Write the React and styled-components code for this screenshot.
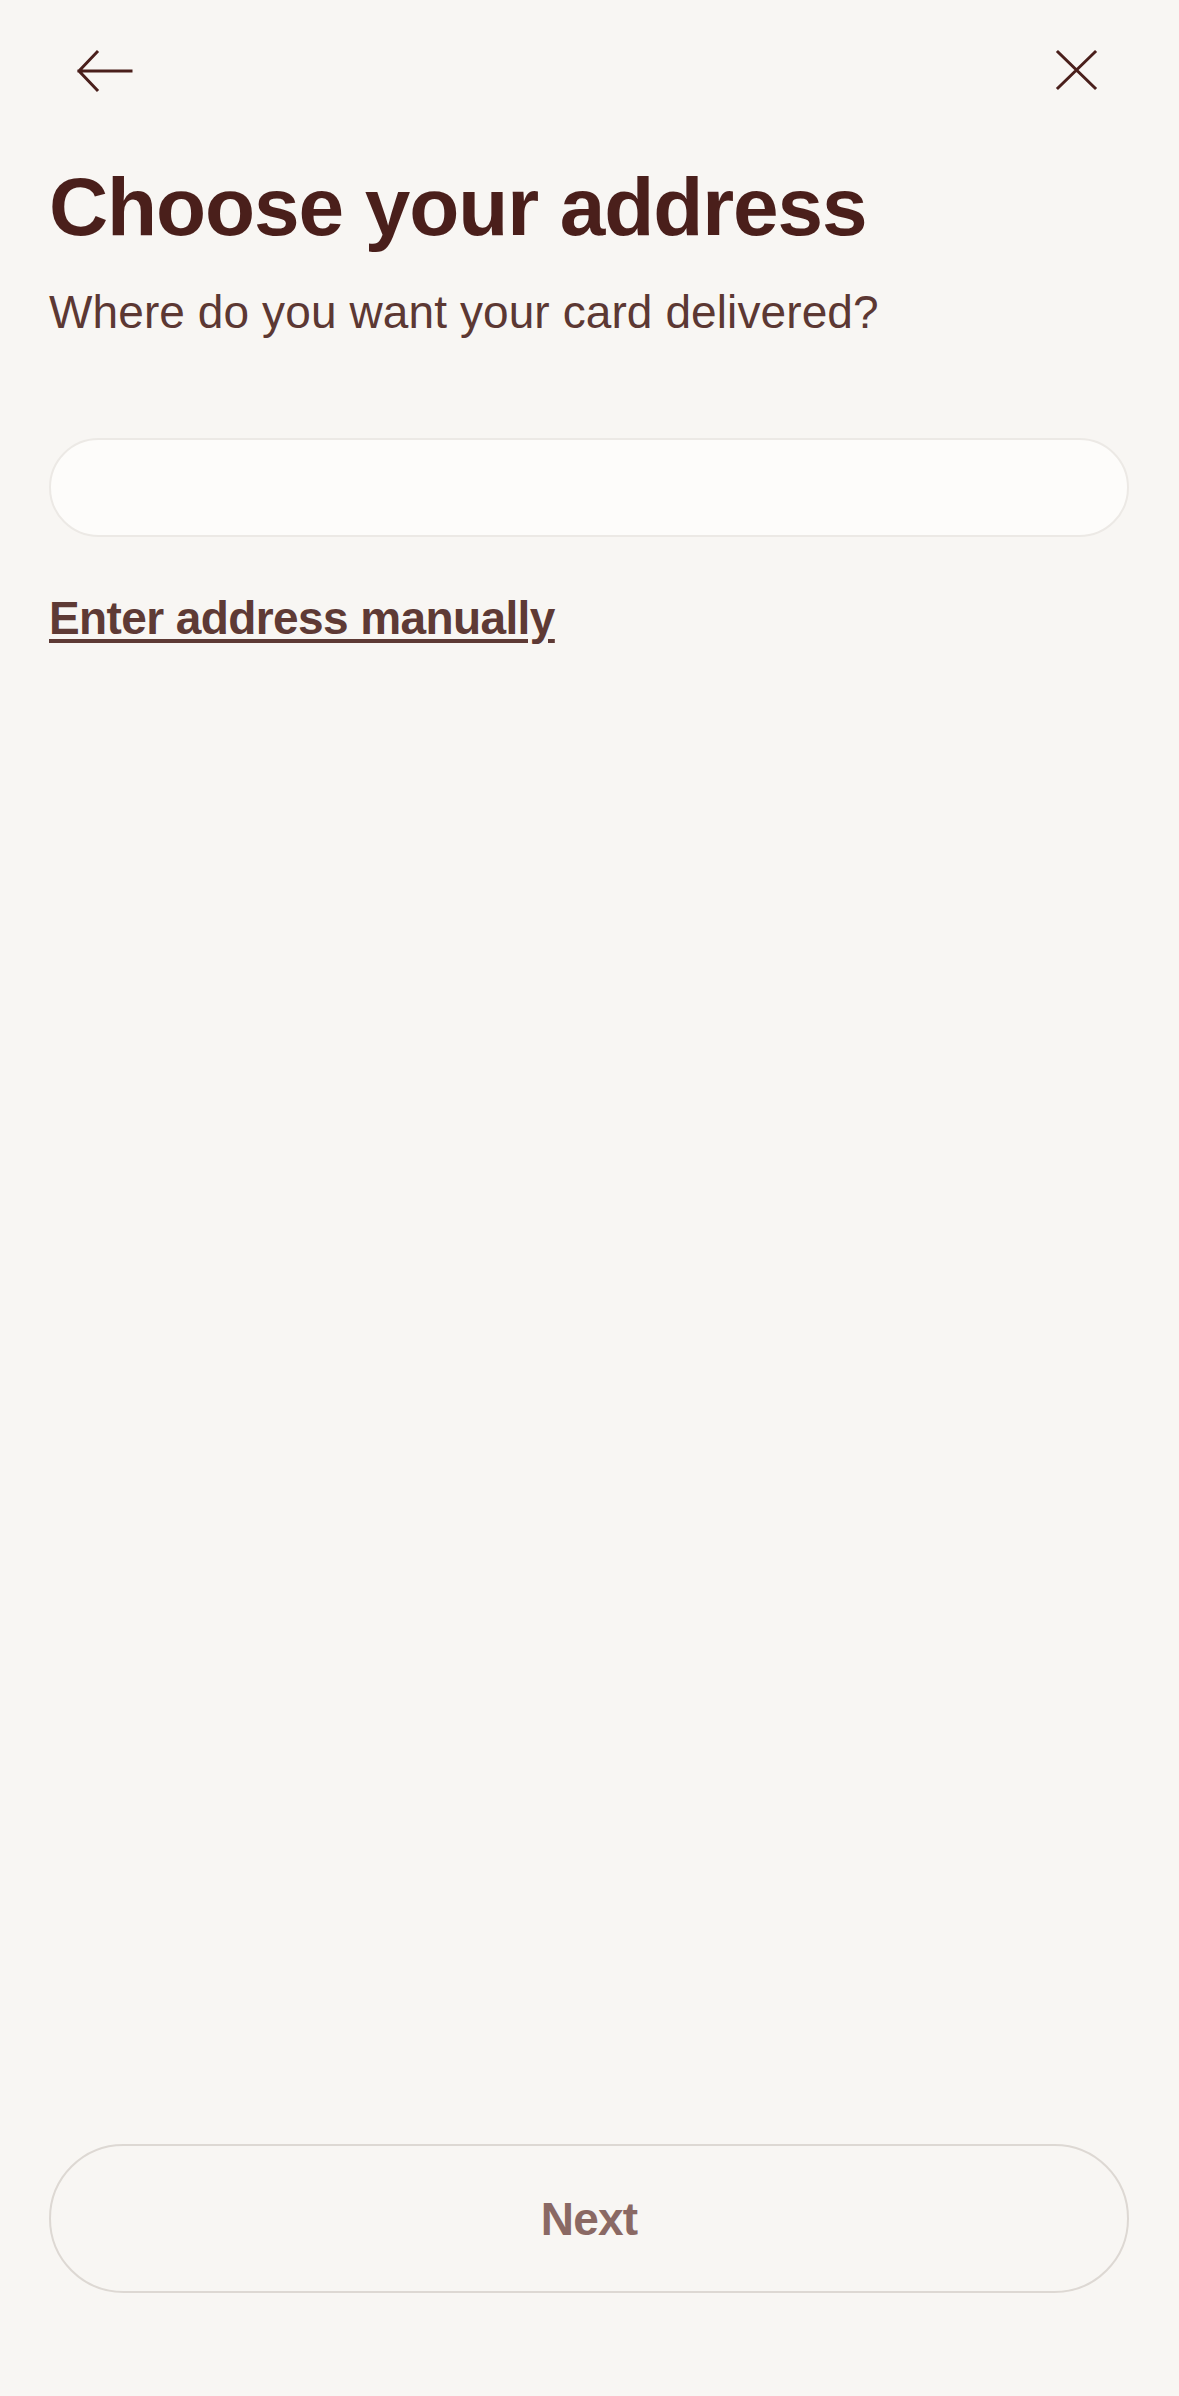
import React, { useState } from 'react'
import styled, { createGlobalStyle } from "styled-components";

const GlobalStyle = createGlobalStyle`
    html, body {
        margin: 0;
        padding: 0;
        background: #f8f6f3;
    }
    body {
        font-family: "Liberation Sans", Arial, sans-serif;
    }
`;

//----------------------------------------------------------------------

const Page = styled.div`
    display: flex;
    flex-direction: column;
    min-height: 2396px;
    box-sizing: border-box;
    background: #f8f6f3;
    padding-bottom: 103px;
`;

const TopBar = styled.div`
    display: flex;
    justify-content: space-between;
    align-items: center;
    height: 140px;
    padding: 0 73px 0 74px;
`;

const IconButton = styled.button`
    display: flex;
    align-items: center;
    justify-content: center;
    width: 60px;
    height: 60px;
    padding: 0;
    border: none;
    background: transparent;
    cursor: pointer;
    svg {
        display: block;
    }
`;

const Content = styled.div`
    display: flex;
    flex-direction: column;
    flex: 1;
    padding: 0 50px 0 49px;
`;

const Title = styled.h1`
    margin: 22px 0 0 0;
    font-size: 82px;
    line-height: 90px;
    font-weight: 700;
    letter-spacing: -1.1px;
    color: #4a1f1b;
`;

const Subtitle = styled.p`
    margin: 32px 0 0 0;
    font-size: 46px;
    line-height: 56px;
    letter-spacing: 0.1px;
    color: #5c3833;
`;

const SearchInput = styled.input`
    margin-top: 98px;
    height: 99px;
    box-sizing: border-box;
    width: 100%;
    border: 2px solid #ece9e5;
    border-radius: 50px;
    background: #fdfcfa;
    padding: 0 40px;
    font-family: inherit;
    font-size: 42px;
    color: #4a1f1b;
    outline: none;
`;

const ManualLink = styled.a`
    align-self: flex-start;
    margin-top: 53px;
    font-size: 46px;
    line-height: 56px;
    font-weight: 700;
    letter-spacing: -0.6px;
    color: #5e3a35;
    text-decoration: underline;
    text-decoration-thickness: 4px;
    text-underline-offset: 5px;
    cursor: pointer;
`;

const Spacer = styled.div`
    flex: 1;
`;

const NextButton = styled.button`
    height: 149px;
    width: 100%;
    border: 2px solid #ddd8d3;
    border-radius: 75px;
    background: transparent;
    font-family: inherit;
    font-size: 46px;
    font-weight: 700;
    letter-spacing: -0.8px;
    color: ${props => props.disabled ? "#8a6964" : "#4a1f1b"};
    cursor: ${props => props.disabled ? "default" : "pointer"};
`;

//----------------------------------------------------------------------

const BackIcon = () => (
    <svg width="60" height="60" viewBox="0 0 60 60" fill="none">
        <path d="M57 31 H5 M23 12 L5 31 L23 50" stroke="#4a1f1b" strokeWidth="3" strokeLinecap="square" />
    </svg>
);

const CloseIcon = () => (
    <svg width="60" height="60" viewBox="0 0 60 60" fill="none">
        <path d="M12 12 L49 48 M49 12 L12 48" stroke="#4a1f1b" strokeWidth="3" strokeLinecap="square" />
    </svg>
);

export default function App() {

    const [address, setAddress] = useState("");

  return (
    <>
        <GlobalStyle />
        <Page>
            <TopBar>
                <IconButton aria-label="Back"><BackIcon /></IconButton>
                <IconButton aria-label="Close"><CloseIcon /></IconButton>
            </TopBar>
            <Content>
                <Title>Choose your address</Title>
                <Subtitle>Where do you want your card delivered?</Subtitle>
                <SearchInput
                    value={address}
                    onChange={e => setAddress(e.target.value)}
                />
                <ManualLink>Enter address manually</ManualLink>
                <Spacer />
                <NextButton disabled={!address}>Next</NextButton>
            </Content>
        </Page>
    </>
  )
}
